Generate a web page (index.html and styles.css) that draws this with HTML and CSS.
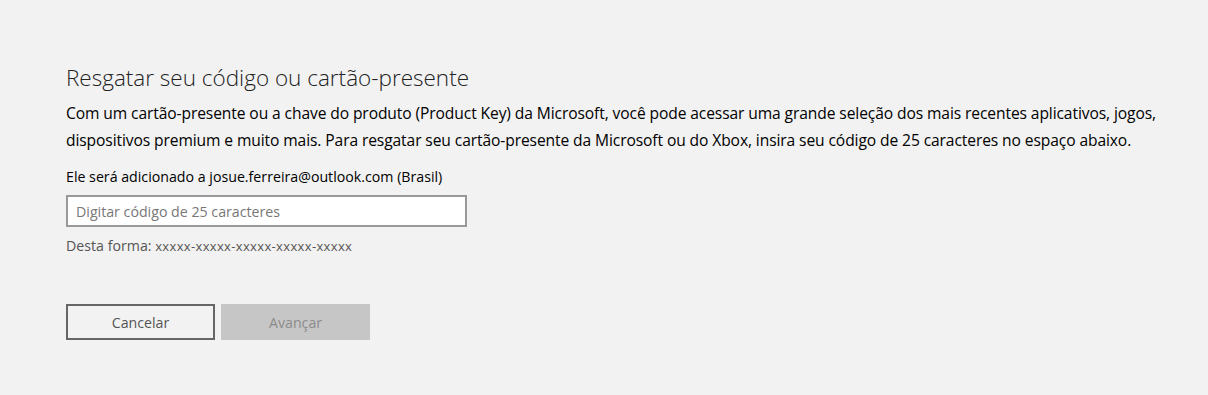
FILE: index.html
```html
<!DOCTYPE html>
<html lang="pt-BR">
<head>
    <meta charset="UTF-8">
    <meta name="viewport" content="width=device-width, initial-scale=1.0">
    <title>Resgatar seu código ou cartão-presente</title>
    <link rel="stylesheet" href="styles.css">
</head>
<body>
    <main class="redeem">
        <h1>Resgatar seu código ou cartão-presente</h1>
        <p class="intro">Com um cartão-presente ou a chave do produto (Product Key) da Microsoft, você pode acessar uma grande seleção dos mais recentes aplicativos, jogos, dispositivos premium e muito mais. Para resgatar seu cartão-presente da Microsoft ou do Xbox, insira seu código de 25 caracteres no espaço abaixo.</p>
        <p class="account">Ele será adicionado a josue.ferreira@outlook.com (Brasil)</p>
        <input class="code" type="text" placeholder="Digitar código de 25 caracteres">
        <p class="hint">Desta forma: <span class="mask">xxxxx-xxxxx-xxxxx-xxxxx-xxxxx</span></p>
        <div class="actions">
            <button class="btn btn-cancel">Cancelar</button>
            <button class="btn btn-next" disabled>Avançar</button>
        </div>
    </main>
</body>
</html>
```

FILE: styles.css
```css
body {
    font-family: "Open Sans", "Noto Sans", sans-serif;
    margin: 0;
    padding: 0;
    background-color: #f2f2f2;
    color: #000;
}
.redeem {
    padding: 63px 0 0 66px;
}
h1 {
    font-size: 22.5px;
    font-weight: 300;
    color: #222;
    margin: 0;
    line-height: 30px;
}
.intro {
    font-size: 15.6px;
    line-height: 27px;
    margin: 7px 0 0;
    max-width: 1130px;
    letter-spacing: -0.1px;
}
.account {
    font-size: 14.2px;
    margin: 13px 0 0;
    line-height: 20px;
}
.code {
    display: block;
    box-sizing: border-box;
    width: 401px;
    height: 32px;
    margin-top: 8px;
    border: 2px solid #999;
    background: #fff;
    padding: 0 8px;
    font-family: inherit;
    font-size: 14.2px;
}
.code::placeholder {
    color: #777;
}
.hint {
    font-size: 14.2px;
    color: #555;
    margin: 9px 0 0;
    line-height: 20px;
}
.mask {
    font-size: 13px;
    letter-spacing: 0.35px;
}
.actions {
    display: flex;
    gap: 6px;
    margin-top: 48px;
}
.btn {
    box-sizing: border-box;
    width: 149px;
    height: 36px;
    font-family: inherit;
    font-size: 14.2px;
}
.btn-cancel {
    background: #f2f2f2;
    border: 2px solid #666;
    color: #555;
}
.btn-next {
    background: #c6c6c6;
    border: none;
    color: #8c8c8c;
}
```
